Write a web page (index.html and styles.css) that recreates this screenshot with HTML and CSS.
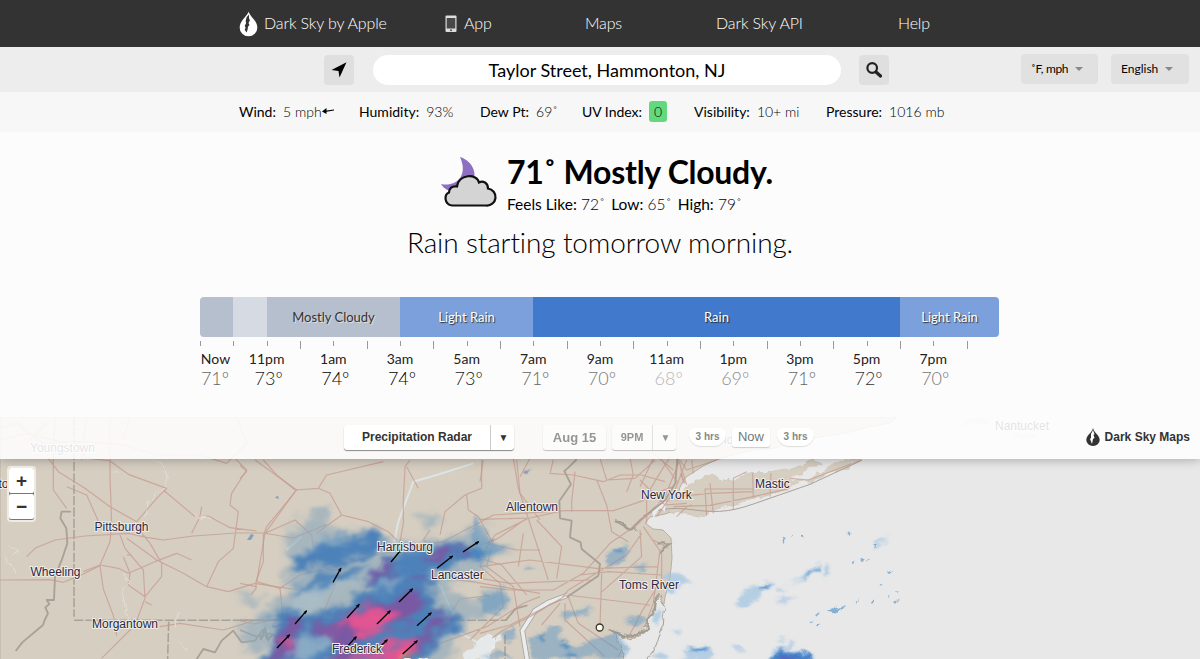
FILE: index.html
```html
<!DOCTYPE html>
<html lang="en">
<head>
<meta charset="utf-8">
<title>Dark Sky - Taylor Street, Hammonton, NJ</title>
<link rel="stylesheet" href="styles.css">
</head>
<body>
<nav class="nav">
  <a class="nav-item"><svg class="logo" viewBox="0 0 20 26"><path fill="#fff" d="M10 0C8 6 .7 9 .7 17a9.3 9 0 0 0 18.6 0C19.3 9 12 6 10 0Z"/><path fill="#333" d="M10.500 3 8 6 7 10l.5 2-1.500 3 1 2-1 2 2 3 1-3 .500-3 1.500-2-1-2 1.500-3-1-2Z"/></svg>Dark Sky by Apple</a>
  <a class="nav-item"><svg class="phone" viewBox="0 0 12 18"><rect x=".5" y=".5" width="11" height="16.5" rx="1" fill="#ddd"/><rect x="1.7" y="3" width="8.6" height="10.5" fill="#484848"/><circle cx="6" cy="15.2" r="1" fill="#555"/></svg>App</a>
  <a class="nav-item">Maps</a><a class="nav-item">Dark Sky API</a><a class="nav-item">Help</a>
</nav>
<header class="search">
  <button class="square"><svg viewBox="0 0 16 16"><path d="M.5 8 15.5.3 8.5 15.5 7.5 9Z"/></svg></button>
  <div class="address">Taylor Street, Hammonton, NJ</div>
  <button class="square find"><svg viewBox="0 0 16 16"><circle cx="6.2" cy="6" r="4.8" fill="none" stroke="#222" stroke-width="2.2"/><path d="m10 10 4.5 4" stroke="#222" stroke-width="3.2" stroke-linecap="round"/></svg></button>
  <div class="select units">˚F, mph<i></i></div>
  <div class="select language">English<i></i></div>
</header>
<section class="stats">
  <div><b>Wind:</b><span>5 mph</span><svg class="wind" viewBox="0 0 12 8"><path d="M12 3 3 4.3" stroke="#000" stroke-width="1.2"/><path d="M0 4.5 4.5 1v6Z"/></svg></div>
  <div><b>Humidity:</b><span>93%</span></div><div><b>Dew Pt:</b><span>69˚</span></div>
  <div><b>UV Index:</b><span class="uv">0</span></div><div><b>Visibility:</b><span>10+ mi</span></div><div><b>Pressure:</b><span>1016 mb</span></div>
</section>
<main class="forecast">
  <div class="current">
    <svg class="weather" viewBox="0 0 58 52"><path fill="#8e70c3" d="M20 0C33 4 39 18 31 29 22 39 6 36 1 27 15 30 29 20 20 0Z"/><path fill="#d4d4d4" stroke="#111" stroke-width="2.2" d="M15 48.500H45a8.500 8.500 0 0 0 2-17c0-6-5-8-9-6-2-9-20-9-22 4-5-1-8 2-8 6-5 2-5 12 3 13Z" transform="translate(1 0)"/></svg>
    <div><h1>71˚ Mostly Cloudy.</h1><p class="feels"><b>Feels Like:</b> 72˚ <b class="sp">Low:</b> 65˚ <b class="sp">High:</b> 79˚</p></div>
  </div>
  <p class="summary">Rain starting tomorrow morning.</p>
  <div class="timeline">
    <div class="bar"><span class="cloud"></span><span class="part"></span><span class="cloud">Mostly Cloudy</span><span class="light">Light Rain</span><span class="rain">Rain</span><span class="light">Light Rain</span></div>
    <div class="ticks"><i></i><i></i><i></i><i></i><i></i><i></i><i></i><i></i><i></i><i></i><i></i><i></i><i></i><i></i><i></i><i></i><i></i><i></i><i></i><i></i><i></i><i></i><i></i><i></i></div>
    <div class="hours">
      <div class="now"><b>Now</b><span class="t71">71º</span></div><div><b>11pm</b><span class="t73">73º</span></div><div><b>1am</b><span class="t74">74º</span></div><div><b>3am</b><span class="t74">74º</span></div><div><b>5am</b><span class="t73">73º</span></div><div><b>7am</b><span class="t71">71º</span></div><div><b>9am</b><span class="t70">70º</span></div><div><b>11am</b><span class="t68">68º</span></div><div><b>1pm</b><span class="t69">69º</span></div><div><b>3pm</b><span class="t71">71º</span></div><div><b>5pm</b><span class="t72">72º</span></div><div><b>7pm</b><span class="t70">70º</span></div>
    </div>
  </div>
</main>
<section class="map">
<svg class="map-art" viewBox="0 417 1200 242">
<defs>
  <filter id="rough" x="-5%" y="-5%" width="110%" height="110%" color-interpolation-filters="sRGB"><feTurbulence type="fractalNoise" baseFrequency=".12" numOctaves="2" seed="4"/><feDisplacementMap in="SourceGraphic" scale="7" xChannelSelector="R" yChannelSelector="G"/></filter>
  <filter id="storm" x="-10%" y="-10%" width="120%" height="120%" color-interpolation-filters="sRGB"><feTurbulence type="fractalNoise" baseFrequency=".045 .07" numOctaves="3" seed="7" result="n"/><feGaussianBlur in="SourceGraphic" stdDeviation="3" result="b"/><feDisplacementMap in="b" in2="n" scale="24" xChannelSelector="R" yChannelSelector="G"/><feGaussianBlur stdDeviation=".8"/></filter>
  <filter id="drizzle" x="-10%" y="-10%" width="120%" height="120%" color-interpolation-filters="sRGB"><feTurbulence type="fractalNoise" baseFrequency=".06 .1" numOctaves="3" seed="12" result="n"/><feGaussianBlur in="SourceGraphic" stdDeviation="1.8" result="b"/><feDisplacementMap in="b" in2="n" scale="11" xChannelSelector="R" yChannelSelector="G"/></filter>
  <marker id="head" viewBox="0 0 8 8" refX="6" refY="4" markerWidth="15" markerHeight="15" markerUnits="userSpaceOnUse" orient="auto"><path d="M0 1 7 4 0 7 2 4Z"/></marker>
</defs>
<rect y="417" width="1200" height="242" fill="#e8e8e8"/>
<path class="land" d="M0 417H897l-7 6-22 4-22 6-20 3-26 4-25 8-20 2-15 3-11 3-13 4-13 6-9 6-8 5-6 10-3 10 1 6-4 8-9 3-15 3-5 6 8 6 10 1 4 4 4 4 1 20-2 20-5 19-2 13-8 16-10 17-10 10-11 22H0Z"/>
<g filter="url(#rough)"><g transform="translate(680 410) scale(.333333)">
  <path class="land" d="M-60 285-25 275 0 262 20 235 50 208 100 192 120 208 145 205 160 213 205 187 260 188 310 182 350 172 395 148 430 160 545 148 500 175 450 188 390 217 350 214 330 235 275 255 220 265 150 287 90 303 70 320 20 312-20 309-60 295Z"/>
  <path fill="#e8e8e8" d="m330 205 35-10 25-25 22 0 28-20 40 0-35 25-40 20-30 17-35-3Z"/>
</g></g>
<g transform="translate(680 410) scale(.333333)">
  <path d="M-110 317C20 260 60 340 220 282L390 223 545 151" fill="none" stroke="#aaa095" stroke-width="3"/>
  <path class="roads" d="M-10 320 20 290 35 285M80 317l-5-80 145 0M100 310l-10-90M160 300v-95l40-20M-20 290l110-4 130-26 110-25M-10 260l100-10 130-5M220 265l-2-75M270 260l3-70M330 205l55 5 160-60M0 150l20 30 90-30M0 190l15 30M35 150l5 40"/>
</g>
<g transform="translate(480 450) scale(.333333)">
  <path d="m265 435-60 22-40 25-38 60 15 90" stroke="#aaa297" stroke-width="16" fill="none"/><path d="m265 435-60 22-40 25-38 60 15 90" stroke="#e8edf1" stroke-width="11" fill="none"/>
  <path fill="#e9edf0" d="m515 182 15-22 28-10-3 35-15-12-20 30ZM0 565l30-12 15 10 0 30-25 20-20 15Z"/>
  <path class="river" d="m290 28-25 25-12 10 20 40-35 50 2 52 35 7-5 50 32 15 3 20 55 45-5 35-95 65M592 25l-6 75-30 50-75 60-30 30-40-25"/>
  <path class="roads" d="M0 95 10 30M100 25l15 90 25 75 65 200M120 80l30-55M0 208l150-4 100-22 150 0 90-30 60-100 20-30M140 205l-85 60-55 20M170 210l75 80-15 95M0 325l65 20 75 90M0 410l90 10 130 0 90-50 80-90 80-55 85-85 42-105M0 550l90-25 150-75 25-30 175-105 45-65M0 590l70-50 80-40 110-65 250 30M265 440l30 80 120 80M255 460l0 50 120 110M365 370l-5 160M300 375l85-10 160 10M240 460l-55 65M145 205l-100 50-45 70M220 30l-10 40 70 5 90 20 50-20 65 0 70 20M285 65l-10 90 0 30M350 90l30 75 15 80 50 30M360 25l20 65 85-5 60-55M450 25l10 50-20 50M520 25l-40 85M545 30l50 70M620 30l-35 90-55 80M580 110l-80 30 0 80M480 90l75 75 65-5M490 230l55 80 0 80-60 95-70 135M480 240l5 80-125 110M520 270l45 25M540 300l-20 160-60 160M580 60l-60-50M600 40l10 60M595 25l25 80M0 350l150-20 200 25 185-5M0 385l90 15 240-10"/>
</g>
<g filter="url(#rough)"><g transform="translate(480 450) scale(.333333)">
  <path fill="#e8e8e8" stroke="#aaa095" stroke-width="3" d="m540 435-30 70-30 50-30 15-35-15-5 20 25 40-20 35 70-5 40-45 20-65 10-60Z"/>
  <path class="ragged" d="m530 430-5 45-20 35-5 30-45 20-60-15M535 280l35 0-20 15-10 15M405 210l30 15 10 15 25-5M385 540l30 10 20 10"/>
</g></g>
<g transform="translate(0 410) scale(.333333)">
  <path class="state" d="M222 20V620M222 631H900M506 635 503 747"/>
  <path class="river" d="M213 305h-28l-4 20 18 30 3 45-15 45-22 55-3 70-22 0 8 12-12 10 8 18-10 20-5 15-62 52-20 26M590 747l20-30 35 10 20-35 35-30 25 35 40-5 25-35"/>
  <path class="roads" d="M145 145l30 40 80 50 75 55 80 45 60-70 30-30-115-42-55-40-75-10-10-50M165 20l-5 130 0 90 40 55M200 230l60 25 40 90M330 20v180l5 145-5 50-30 70-50 20M0 510l150-1 40 8 60-25 50-25 10 70 30 80 10 60M80 440l25-25 60-25 90-12 130-8 55 12 50 8 90-12 130-9 80 0 90 15 100-40M380 385l90 65 80 40 70 40 65 15 80-25 130 20M490 240l95 80 40-2 65 35 80 10M765 150l125 90-90 110-10 25M705 145l35 35-45 70-5 35 25 20-15 110-45 40-35 75M790 375l0 80-22 60 0 20-15 20M300 465l55 10 30 15 80-35 65-25 45 20M360 375l15 40 55 65 5 85-30 80-100 100M370 440l20 50-5 35 50 35 50-60 0-40-35-60-40-50M575 370l25-50 5-30M380 435h15M435 575l20 10M480 650l60-10 130 20 100-30 130-5M0 90l80-20 100 25 80 0 110 10 100 30 130 0 80 25M0 55l50-15 80 60 110-5M80 100l60-60M260 20l-15 130M390 20l-20 70M710 20l30 80-60 60"/>
</g>
<g filter="url(#rough)"><g transform="translate(0 410) scale(.333333)"><path d="m460 145 40 40-5 40-50 50-5 35-10 15M340 185l20 5M25 405l35 20-20 10M15 440l30 50M370 490l20 30-25 20 20 90M525 650l5-35 10-5M540 700l20 20M590 320l45 5" fill="none" stroke="#e3dfd7" stroke-width="3"/><path class="ragged" d="m785 690 10-30 10 30 15-20M820 650l60-10"/></g></g>
<g transform="translate(240 460) scale(.333333)">
  <path d="m700 10-110 35-70 20-45 120-12 60 30 60 110 75 30 70 30 70 50 28M185 230l-45 40" fill="none" stroke="#dee3e4" stroke-width="6"/>
  <path class="state" d="M0 481H800M795 525v72"/><path class="river" d="m797 481 30-35 35-10M0 510l50 20 40-10 60 30"/>
  <path class="roads" d="M70 0l40 45 55 45 70-5 25-40L430 5M235 85l35 15 35 65 80 20 60 30 25 25M165 95 75 220l-25 145 70 20 60-40 120-30 110-30 90-20 110-20 150-80 165-10M230 220l75-55M75 220l90-40 50 45 10 90 75 20-60 150M120 385l10 100-10 110M600 225l15-70 60-50 50-20 0-85M680 105l5 45 30 20 50 90M510 0l-15 20-5 100 0 70-20 110-50 90-10 80-50 100M500 20l35 65M475 285l60 60 160 20 205 35M570 210l-20 30 50 35M430 300l-65 110-35 170M750 240l-30 80 60 50 10 70-100 100M740 250l90 20 70 0M760 240l-20 80 80 60 20 120M830 0l10 100 60 80M850 220l-15 100M0 370l50 10M0 15l20 20-20 20M0 482l40 10 100-20M600 550l140-50 110-70 50-20M500 597l20-80 100-40 40-60 90-10"/>
</g>
<g filter="url(#rough)"><g transform="translate(240 460) scale(.333333)"><path fill="#e6e9e9" d="m705 545 10-15 15 10 15-20 15 20 20-15 5 15-25 10-10 47-75 3-10-25 35-5Z"/></g></g>
<g filter="url(#storm)"><g transform="translate(240 460) scale(.333333)">
  <g fill="#8ca8bb" opacity=".62"><path d="M170 180l60-30 40 20 20 35-40 25-60 25-50 15-5-40Z"/><path d="M515 165l60-5 20 30-20 25Z"/><path d="M130 330 150 260 210 225 280 220 380 210 450 235 540 245 630 230 700 195 740 220 750 245 810 265 760 310 680 350 620 400 690 410 790 395 800 435 720 470 680 500 660 540 615 620H50L80 520 60 450 150 400Z"/><path d="M-20 415l100-15-40 35ZM0 500 80 470 90 540 20 580Z"/></g>
  <g fill="#3c78b8" opacity=".85"><path d="M150 290l70-25 60-30 60 0 60-30 40 25-20 40-90 25-60 25-100 20Z"/><path d="M370 370 430 310 490 275 570 265 630 245 720 265 735 285 690 305 620 325 550 370 590 390 570 440 640 460 660 500 590 540 540 620H55L110 540 85 470 150 440 190 470 260 455 340 415 410 385Z"/><path d="M150 410l70-60 100-25 70-10-60 40-80 25Z"/></g>
  <g fill="#a9c0ca" opacity=".65"><path d="M170 400l50-20 80-20 60-20-20 35-80 15-20 45-80 30Z"/><path d="M250 510l60-5-10 40-50 25-40 25 10-50ZM400 390l60-40 30-10-40 45Z"/><path d="M200 510l-60 50 10 40h60l20-60ZM180 265l80-20 90-5-70 25Z"/></g>
  <g fill="#7f53a0" opacity=".9"><path d="M385 365l30-35 40-15 10 15-35 25Z"/><path d="M550 285l50-20 50-5-15 25-45 15ZM660 265l40 10-30 15ZM490 355l50-10 15 10-50 10Z"/><path d="M120 520l35-45 30 10-15 45-5 35-35 35-45 10ZM210 505l50-15 100-45 120-35 70-15-10 40-40 50-60 20-80 20-30 60-45 15-10-60-50-25ZM570 470l40-10 10 30-50 40ZM420 565l100-40 70-20-80 100H250Z"/></g>
  <g fill="#ed5390" opacity=".9"><path d="M290 485l50-25 40-15 60 0 50 20-30 25-40 20-60 10-40-30-40 10Z"/><path d="M125 545l30-25 10 15-25 30ZM260 600l130-25 80-30 60-20 10 10-45 65Z"/></g>
  <path fill="#fe8c64" d="M450 605l45-20 25-15-20 35Z"/>
</g></g>
<g filter="url(#drizzle)"><g transform="translate(480 450) scale(.333333)">
  <g fill="#5f96c4" opacity=".5"><path d="M-20 190 20 250 50 285 85 290 35 315-20 340ZM385 310l55-35 10 10-25 55-45 10ZM0 440l60-20 30 20-10 40-70 15ZM240 490l100-20-20 20-60 20ZM135 350l20-5 10 8-20 8Z"/><path d="M150 560l60-30 40 0-10 40 60 20 50-30 60-15 40 50-40 30H150ZM430 510l50-15 20 10-30 25Z"/><path d="M460 350l50-8-20 18ZM60 550l40-20 10 30-30 20ZM0 620l60-20 40 20Z"/></g>
  <path fill="#407fc0" opacity=".6" d="m170 565 20-15-5 25ZM240 575l20-5 15 15-15 15ZM240 615l40-12 5 20M400 300l25-5-15 20ZM-20 295l30 5-10 25h-20Z"/>
  <g fill="#9fc3e2" opacity=".7"><path d="M560 375l50-2 25 18-30 10-30 30-20-5ZM525 480l20 0-10 45-20 0Z"/><path d="M765 460l40-48 55-20 25 5-30 30-25 20-45 25Z"/><path d="M615 595l60-10 20 20 0 30H610ZM570 545l30-8-5 15ZM510 620l40-20 10 30ZM760 590l30 5 5 12M890 420h20v10h-20Z"/></g>
  <g fill="#2d78c2" opacity=".85"><path d="m132 70 8-12 12-2-5 14ZM840 412l12-10 12 0-10 13ZM620 600l45-5 15 5-20 5ZM640 620h45M870 635l30-40 50 30 30 20H870Z"/></g>
  <circle cx="142" cy="65" r="4" fill="#8659b1"/>
</g></g>
<g filter="url(#drizzle)"><g transform="translate(680 410) scale(.333333)">
  <g fill="#a7c7e3" opacity=".7"><path d="M280 540l40-15 40-20 40-40 20-5-5 25-35 20-50 15ZM275 580l30-15 50-5-40 20ZM160 710l15-5 15 25-20-15ZM295 690l20-10-10 20ZM320 697h30l-20 20ZM265 747l20-30 35-10 50 20 40 20ZM435 465h18l-8 35-15-5Z"/><path d="m580 420 5-20 35-30-10 25Z"/></g>
  <path fill="#417dc9" d="m275 750 25-27 35-4 55 20 5 11Z"/><path fill="#6260c1" d="m295 746 20-15 30 10 10 8Z"/><path fill="#5294d1" opacity=".8" d="m368 505 20-15 20-5-10 12ZM402 480l18-10-5 18Z"/>
</g></g>
<g filter="url(#rough)"><g transform="translate(680 410) scale(.333333)"><path fill="#649dcc" opacity=".75" d="M305 380l12 5-7 15ZM535 445l18 0-12 15ZM445 600l20-7 15 3 18-17-10 20-20 10ZM580 405l10 0-5 10ZM618 485l15-8-10 15ZM558 455l12-8-8 12ZM333 380l6-4 3 5ZM360 378h7v5h-7ZM518 460l8-6-5 12ZM405 615l18-5-12 10ZM388 632h10l-7 4ZM408 645l12 0-8 5ZM527 575l10-7-5 10ZM570 572l12-4-5 7ZM645 572l14-5-8 12ZM648 545l9-3-6 8ZM620 560l9-3-5 7ZM602 530l10-7-8 12ZM502 370l10-3-4 9Z"/></g></g>
<path fill="#5d92bd" opacity=".7" d="m275 497 3-1 1 3-3-1ZM247 540l4-6 3 1-3 5Z"/>
<g class="arrows" transform="translate(240 460) scale(.333333)"><path d="m279 367 24-43"/><path d="m453 306 32-39"/><path d="m591 325 47-37"/><path d="m669 276 47-31"/><path d="m477 426 41-40"/><path d="m321 474 37-41"/><path d="m411 492 40-40"/><path d="m531 497 43-39"/><path d="m165 492 35-40"/><path d="m111 564 38-40"/><path d="m321 560 28-30"/><path d="m420 560 22-21"/><path d="m488 582 44-40"/></g>
<circle cx="599.700" cy="627.500" r="3.500" fill="#ffffdf" stroke="#333" stroke-width="1.300"/>
<g class="places"><text x="30" y="452">Youngstown</text><text x="-1.500" y="488">to</text><text x="94.500" y="531">Pittsburgh</text><text x="30.500" y="576">Wheeling</text><text x="92" y="628">Morgantown</text><text x="377" y="551">Harrisburg</text><text x="431" y="579">Lancaster</text><text x="332" y="653">Frederick</text><text x="404" y="668">Baltimore</text><text x="506" y="511">Allentown</text><text x="641" y="499">New York</text><text x="755" y="488">Mastic</text><text x="619" y="589">Toms River</text><text x="712" y="444">Bridgeport</text><text x="995" y="430">Nantucket</text></g>
<path fill="#ddd5ca" filter="url(#rough)" d="m960 425 10-7 20 0-2 8-10-3-12 2ZM1012 433l23 1-3 5-15-1Z"/>
</svg>
<div class="toolbar">
  <div class="control layer"><span>Precipitation Radar</span><i>▼</i></div>
  <div class="control faded date">Aug 15</div>
  <div class="control faded hour"><span>9PM</span><i>▼</i></div>
  <div class="step">3 hrs</div><div class="present">Now</div><div class="step">3 hrs</div>
  <div class="brand"><svg viewBox="0 0 14 18"><path d="M7 0C6 5 .3 7 .3 12a6.700 6 0 0 0 13.400 0C13.700 7 8 5 7 0Z"/><path fill="#fff" d="M7 2 5 6l0 4-1 1 2 5 1-5 1.500-1-1-3 1-1Z"/></svg>Dark Sky Maps</div>
</div>
<div class="zoomer"><button>+</button><button>−</button></div>
</section>
</body>
</html>
```
FILE: styles.css
```css
*{box-sizing:border-box}
body{margin:0;width:1200px;height:659px;overflow:hidden;background:#fcfcfc;font-family:Lato,sans-serif;color:#000}
button{border:0;padding:0;font:inherit}
h1,p{margin:0}
b{font-weight:400}
.nav{height:47px;background:#333;color:#fff;display:grid;grid-template-columns:206px 140px 131px 182px 100px;padding:0 0 3px 239px;font-size:16px;font-weight:300;letter-spacing:-.15px}
.nav-item{display:flex;align-items:center;white-space:nowrap}
.logo{width:19px;height:26px;margin:3px 6px 0 0}
.phone{width:12px;height:18px;margin:3px 7px 0 0}
.search{height:45px;background:#ededed;display:flex;align-items:center;padding-left:324px}
.square{width:30px;height:30px;border-radius:4px;background:#dfdfdf;display:flex;align-items:center;justify-content:center}
.square svg{width:16px;height:16px}
.address{width:468px;height:30px;margin:0 18px 0 19px;border-radius:15px;background:#fff;text-align:center;font-size:18px;line-height:31px}
.select{height:30px;margin-top:-1px;border-radius:4px;background:#e1e1e2;font-size:12px;display:flex;align-items:center;padding:0 0 2px 10px}
.select i{border:4px solid transparent;border-top:4px solid #888;border-bottom:0;margin:2px 0 0 7px}
.units{width:77px;margin-left:132px;letter-spacing:-.35px}
.language{width:78px;margin-left:13px}
.stats{height:40px;background:#f7f7f7;display:grid;grid-template-columns:120px 121px 102px 112px 132px 150px;padding:0 0 2px 239px;font-size:14px}
.stats div{display:flex;align-items:center;white-space:nowrap}
.stats span{font-weight:300;margin-left:7px}
.stats .wind{width:12px;height:8px}
.stats .uv{width:18px;height:21px;line-height:21px;text-align:center;background:#62d97d;border-radius:3px}
.forecast{height:285px;padding-top:22px}
.current{display:flex;padding-left:440px;height:65px}
.weather{width:58px;height:52px;margin:3px 9px 0 0}
h1{font-size:32px;line-height:36px;font-weight:700;white-space:nowrap;letter-spacing:-.27px}
.feels{font-size:15.500px;line-height:28px;font-weight:300;white-space:nowrap;letter-spacing:-.02px}
.sp{margin-left:2px}
.summary{font-size:28px;font-weight:300;text-align:center;line-height:46px;height:78px;letter-spacing:-.12px}
.timeline{width:800px;margin-left:200px}
.bar{height:40px;width:799px;display:grid;grid-template-columns:33px 34px 133px 133px 367px 99px;border-radius:4px;overflow:hidden;font-size:13px;line-height:40px;text-align:center}
.cloud{background:#b6bfce;color:#333;text-shadow:1px 1px 0 #ddd}
.part{background:#d5dae3}
.light{background:#7ba0db;color:#fff;text-shadow:1px 1px 1px #333}
.rain{background:#4179cd;color:#fff;text-shadow:1px 1px 1px #222}
.ticks{display:grid;grid-template-columns:repeat(24,33.333px);height:13px;padding-top:4px}
.ticks i{height:5px;border-left:1px solid #999}
.ticks i:nth-child(even){height:8px}
.ticks i:nth-child(2){height:5px}
.hours{display:grid;grid-template-columns:33.333px repeat(11,66.667px);text-align:center}
.hours div{display:flex;flex-direction:column}
.hours b{font-size:14px;line-height:18px;color:#222}
.hours span{font-size:18px;line-height:21px;font-weight:300;padding-left:4px}
.hours .now b{width:31px}.hours .now span{padding:0;width:30px}
.t74{color:#000}.t73{color:#222}.t72{color:#333}.t71{color:#666}.t70{color:#777}.t69{color:#909090}.t68{color:#b8b8b8}
.map{height:242px;position:relative;overflow:hidden;font-family:"Liberation Sans",Arial,sans-serif}
.map-art{display:block;width:1200px;height:242px}
.land{fill:#d6cec1;stroke:#b6afa3;stroke-width:1px}
.roads{fill:none;stroke:#c4978c;stroke-opacity:.7;stroke-width:3.5px;stroke-linejoin:round}
.state{fill:none;stroke:#aaa196;stroke-width:4.500px;stroke-dasharray:28 6}
.river{fill:none;stroke:#aaa196;stroke-width:5.500px;stroke-linejoin:round}
.ragged{fill:none;stroke:#a39c90;stroke-width:7px}
.arrows path{stroke:#000;stroke-width:4;marker-end:url(#head)}
.places text{font-size:12px;fill:#282744;stroke:#f0ece5;stroke-width:2px;paint-order:stroke}
.toolbar{position:absolute;top:0;left:0;width:1200px;height:42px;background:rgba(255,255,255,.87);box-shadow:0 1px 10px rgba(0,0,0,.28);display:flex;align-items:center;padding-left:344px;padding-bottom:2px}
.control{height:25px;border-radius:3px;background:#fff;box-shadow:0 1px 1px #888;display:flex;align-items:center;justify-content:center;color:#333;font-size:12px;font-weight:700}
.control span{flex:1;text-align:center}
.control i{font-style:normal;width:24px;text-align:center;border-left:1px solid #ccc;line-height:25px;font-size:10px;padding-left:2px}
.layer{width:170px}.date{width:63px;margin-left:29px;font-size:13px}.hour{width:64px;margin-left:6px;font-size:11px}
.faded{opacity:.5}
.step{width:37px;height:18px;margin-left:13px;border-radius:6px 6px 12px 12px;background:#fff;box-shadow:0 1px 1px #ddd;color:#888;font-size:10px;line-height:18px;text-align:center;font-weight:700}
.present{width:38px;height:19px;margin-left:6px;background:#fff;border-radius:3px;box-shadow:0 1px 1px #ccc;color:#777;font-size:13px;line-height:18px;text-align:center}
.present+.step{margin-left:7px}
.brand{margin-left:auto;padding-right:10px;display:flex;align-items:center;color:#333;font-size:12px;font-weight:700}
.brand svg{width:14px;height:18px;margin-right:5px;fill:#333}
.zoomer{position:absolute;left:7px;top:49px;width:29px;border:2px solid #eeeae4;border-radius:4px;background:#777;display:flex;flex-direction:column;gap:1px;padding-bottom:1px}
.zoomer button{height:25px;background:#fff;color:#333;font-size:19px;font-weight:700;line-height:23px;border-radius:2px}
```
